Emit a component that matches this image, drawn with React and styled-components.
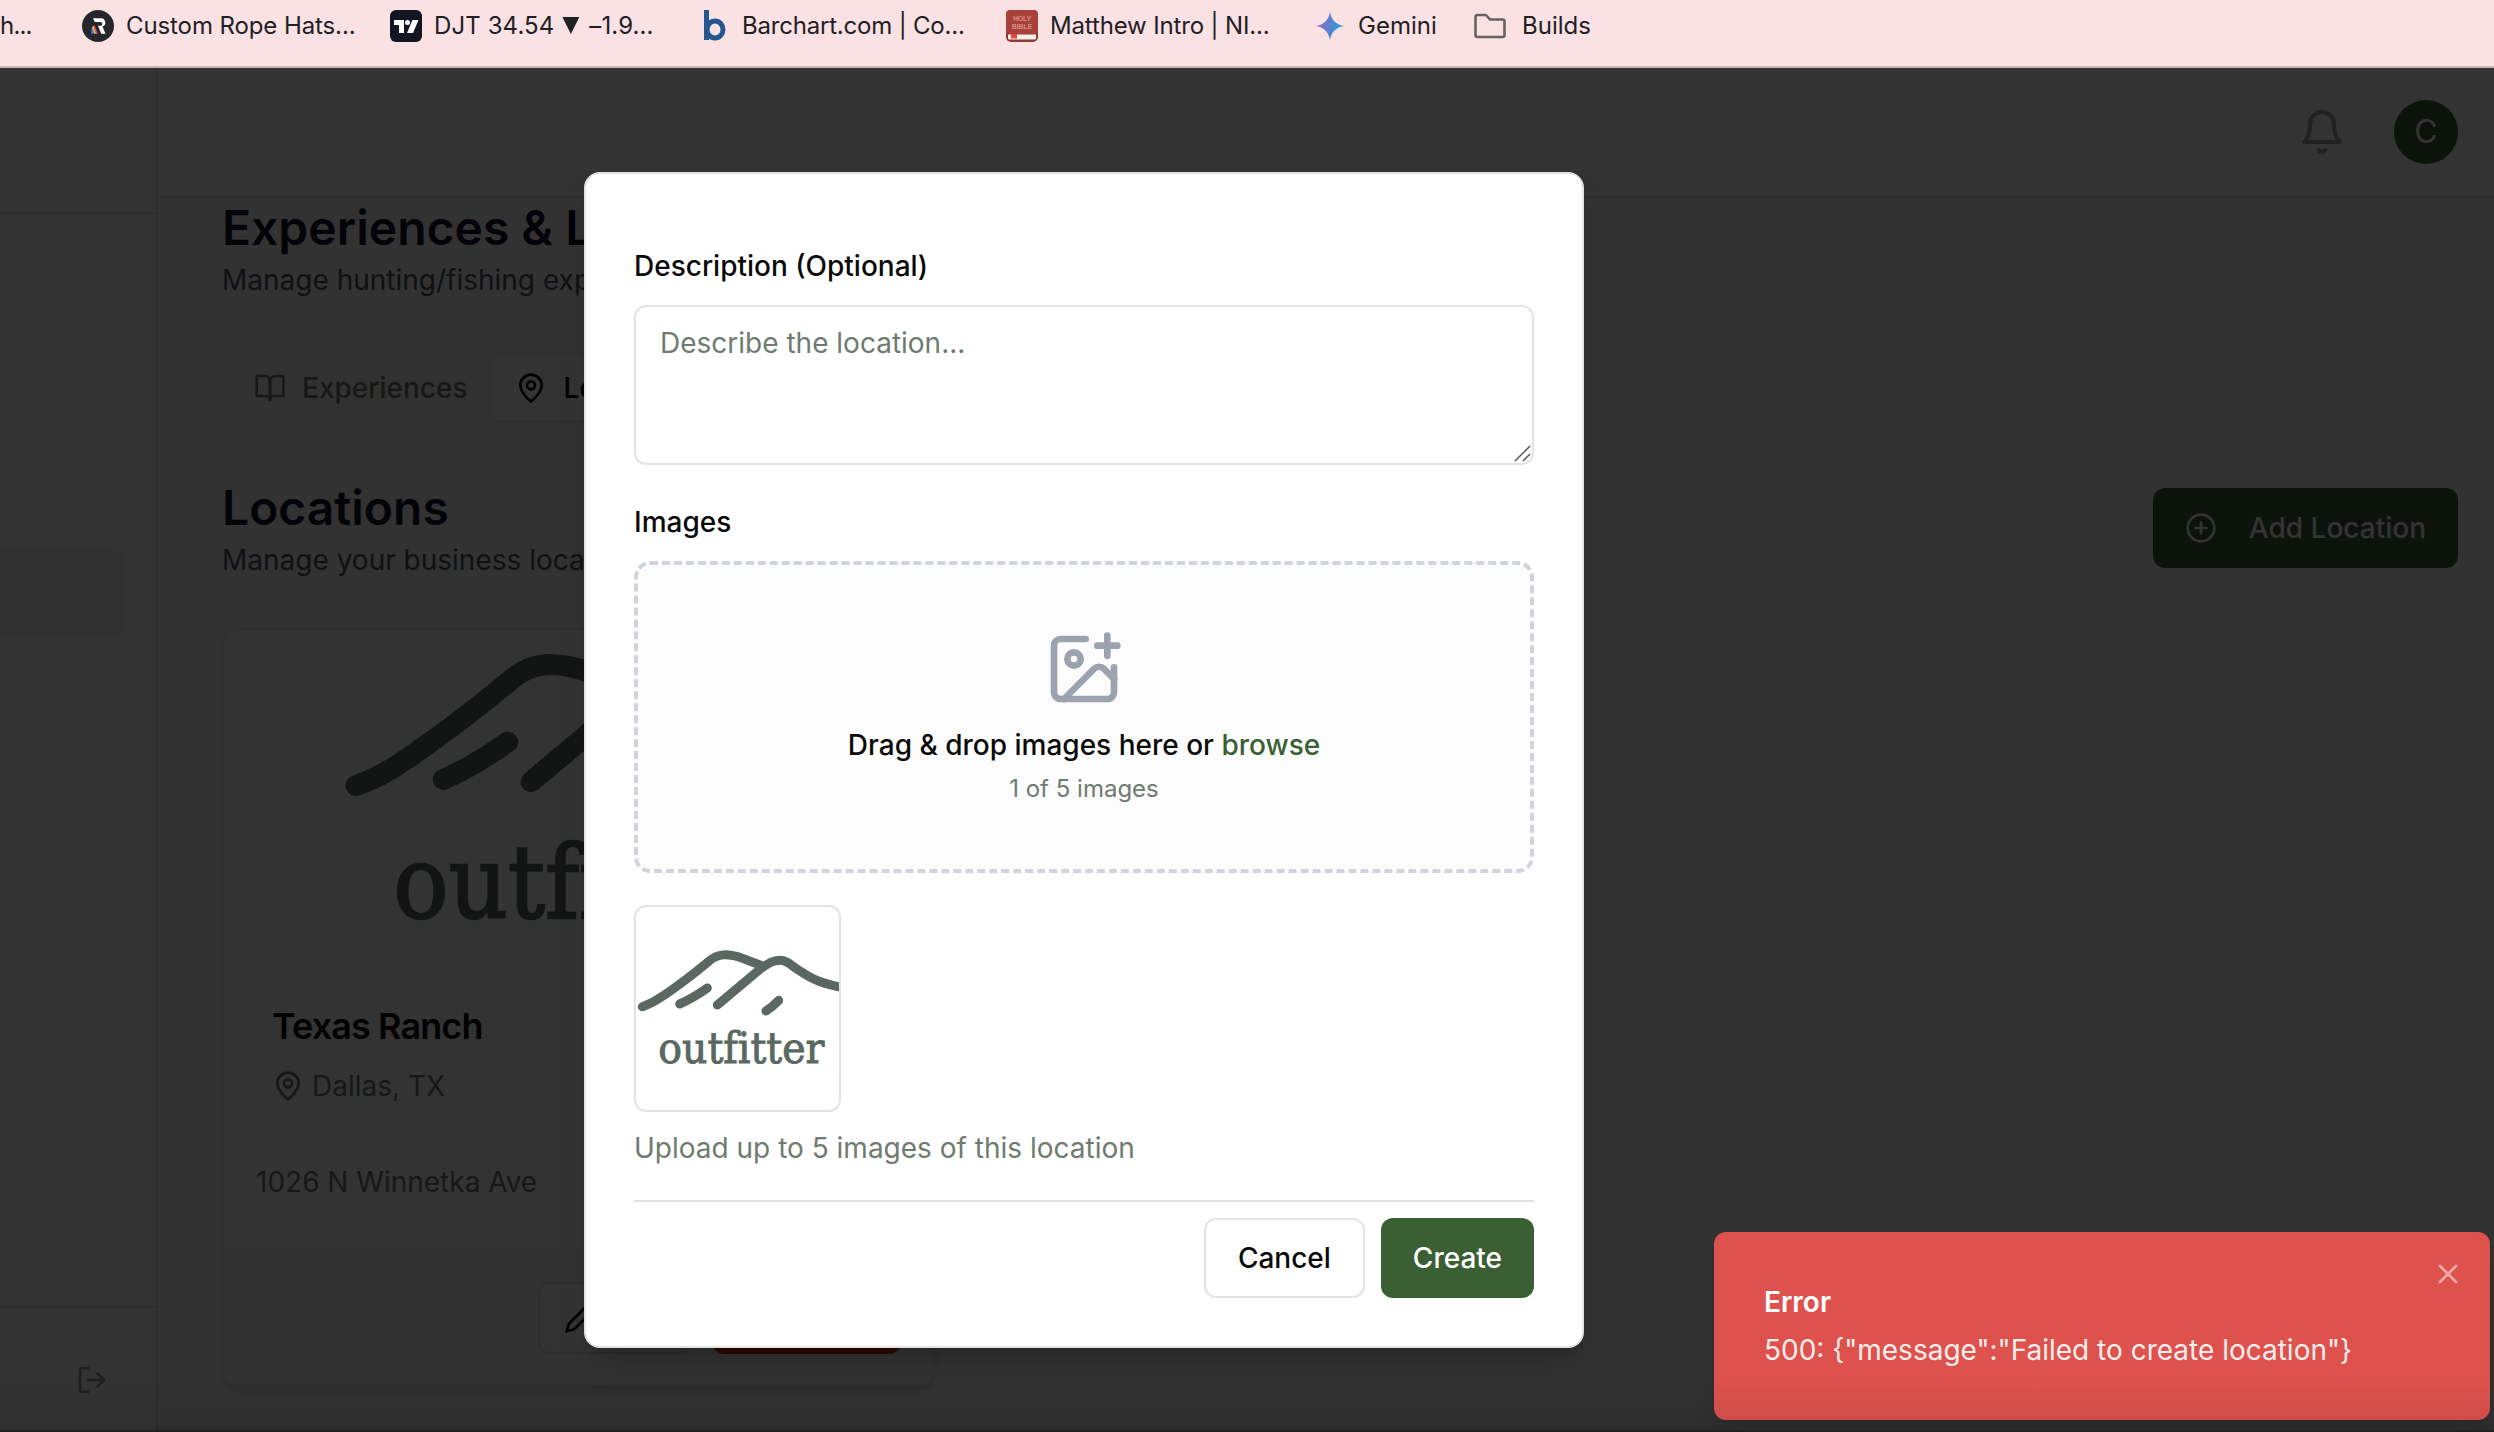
import React from "react";
import styled, { createGlobalStyle } from "styled-components";

const GlobalStyle = createGlobalStyle`
  *, *::before, *::after { box-sizing: border-box; }
  body { margin: 0; overflow: hidden; }
  button, textarea { font: inherit; letter-spacing: inherit; }
  h1, h2, h3, p { margin: 0; }
`;

const border = "#e4e4e4";
const muted = "#6f7b70";
const green = "#395f33";

const Window = styled.div`
  position: relative;
  display: flex;
  flex-direction: column;
  width: 2494px;
  height: 1432px;
  overflow: hidden;
  background: #fff;
  color: #0a0a0a;
  font-family: Inter, "Liberation Sans", sans-serif;
  font-size: 28px;
  line-height: 40px;
`;

/* Bookmarks */
const BookmarkBar = styled.nav`
  display: flex;
  flex: none;
  height: 68px;
  padding-bottom: 14px;
  align-items: center;
  background: #fae1e4;
  border-bottom: 2px solid #c8b4b7;
  color: #1f2023;
  font-size: 24px;
  line-height: 32px;
  white-space: nowrap;
`;
const Bookmark = styled.a`
  display: flex;
  flex: none;
  align-items: center;
  gap: ${(p) => p.$gap || 12}px;
  width: ${(p) => p.$width}px;
  letter-spacing: ${(p) => p.$tracking || 0}px;
  svg { flex: none; }
`;
const Triangle = styled.span`
  display: inline-block;
  width: 17px;
  height: 17px;
  margin: 0 10px 0 8px;
  clip-path: polygon(0 0, 100% 0, 50% 100%);
  background: currentColor;
`;

/* Application shell */
const Shell = styled.div`
  display: flex;
  flex: 1;
  min-height: 0;
`;
const Sidebar = styled.aside`
  display: flex;
  flex: none;
  flex-direction: column;
  width: 158px;
  border-right: 2px solid ${border};
`;
const SidebarBrand = styled.div`
  flex: none;
  height: 146px;
  border-bottom: 2px solid ${border};
`;
const SidebarNav = styled.div`
  flex: 1;
  padding: 336px 32px 0 0;
`;
const ActiveItem = styled.div`
  height: 88px;
  border-radius: 0 12px 12px 0;
  background: #f2f3f3;
`;
const SidebarFooter = styled.div`
  display: flex;
  flex: none;
  justify-content: flex-end;
  height: 126px;
  padding: 56px 48px 0 0;
  border-top: 2px solid ${border};
  color: #8f96a3;
`;
const Content = styled.div`
  display: flex;
  flex: 1;
  flex-direction: column;
  min-width: 0;
`;
const TopBar = styled.header`
  display: flex;
  flex: none;
  align-items: center;
  justify-content: flex-end;
  gap: 48px;
  height: 130px;
  padding-right: 36px;
  border-bottom: 2px solid ${border};
  color: #9ca3af;
`;
const Avatar = styled.div`
  display: grid;
  place-items: center;
  width: 64px;
  height: 64px;
  border-radius: 50%;
  background: ${green};
  color: #fff;
  font-size: 32px;
`;
const Main = styled.main`
  display: flex;
  flex: 1;
  flex-direction: column;
  gap: 48px;
  min-height: 0;
  padding: 0 36px 0 64px;
  background: #fafafa;
  overflow: hidden;
`;
const Heading = styled.div`
  flex: none;
  margin-top: ${(p) => p.$offset || 0}px;
`;
const Title = styled.h1`
  color: #111827;
  font-size: 48px;
  font-weight: 600;
  line-height: 64px;
`;
const Subtitle = styled.p`
  color: #4b5563;
`;
const TabList = styled.div`
  display: flex;
  flex: none;
  align-self: flex-start;
  padding: 8px;
  border-radius: 12px;
  background: #f2f3f2;
`;
const Tab = styled.div`
  display: flex;
  align-items: center;
  gap: 16px;
  height: 64px;
  padding: 0 24px;
  border-radius: 8px;
  background: ${(p) => (p.$active ? "#fff" : "transparent")};
  color: ${(p) => (p.$active ? "#0a0a0a" : muted)};
  font-weight: 500;
  box-shadow: ${(p) => (p.$active ? "0 2px 4px rgba(0,0,0,.06)" : "none")};
`;
const SectionHead = styled.div`
  display: flex;
  flex: none;
  align-items: center;
  justify-content: space-between;
`;
const Button = styled.button`
  display: inline-flex;
  flex: none;
  align-items: center;
  justify-content: ${(p) => (p.$start ? "flex-start" : "center")};
  gap: ${(p) => p.$gap || 16}px;
  height: ${(p) => p.$height || 80}px;
  width: ${(p) => (p.$width ? `${p.$width}px` : "auto")};
  padding: 0 ${(p) => p.$pad || 32}px;
  border: ${(p) => (p.$outline ? `2px solid ${border}` : "0")};
  border-radius: 12px;
  background: ${(p) => p.$bg || "#fff"};
  color: ${(p) => (p.$outline ? "#0a0a0a" : "#fff")};
  font-weight: 500;
  white-space: nowrap;
`;
const Card = styled.article`
  display: flex;
  flex: none;
  flex-direction: column;
  width: 713px;
  height: 758px;
  border: 2px solid #f0f1f1;
  border-radius: 16px;
  background: #fff;
  box-shadow: 0 8px 12px -2px rgba(0,0,0,.12), 0 4px 8px -4px rgba(0,0,0,.1);
  overflow: hidden;
`;
const CardImage = styled.div`
  height: 330px;
  svg { display: block; width: 100%; height: 100%; }
`;
const CardHead = styled.div`
  padding: 48px 48px 0;
`;
const CardTitle = styled.h3`
  margin-bottom: 22px;
  font-size: 36px;
  font-weight: 600;
  letter-spacing: -0.9px;
  line-height: 36px;
`;
const Place = styled.p`
  display: flex;
  align-items: center;
  gap: 8px;
  color: ${muted};
`;
const CardBody = styled.div`
  flex: 1;
  padding: 56px 32px 0;
  color: ${muted};
`;
const CardFooter = styled.div`
  display: flex;
  justify-content: flex-end;
  gap: 20px;
  height: 134px;
  padding: 32px 32px 0;
  background: #fafafa;
`;

/* Layers over the page */
const Overlay = styled.div`
  position: absolute;
  inset: 68px 0 0;
  background: rgba(0, 0, 0, 0.8);
`;
const BottomShade = styled.div`
  position: absolute;
  inset: 1376px 0 0;
  border-bottom: 2px solid #241f21;
  background: linear-gradient(rgba(0,0,0,0), rgba(0,0,0,.08));
  pointer-events: none;
`;
const Dialog = styled.section`
  position: absolute;
  top: 172px;
  left: 584px;
  display: flex;
  flex-direction: column;
  width: 1000px;
  height: 1176px;
  padding: 78px 48px 48px;
  border: 2px solid ${border};
  border-radius: 16px;
  background: #fff;
  box-shadow: 0 20px 30px -6px rgba(0,0,0,.16), 0 8px 12px -8px rgba(0,0,0,.16);
`;
const Field = styled.div`
  display: flex;
  flex-direction: column;
  margin-bottom: ${(p) => p.$after || 0}px;
`;
const Label = styled.label`
  margin-bottom: 25px;
  font-weight: 500;
  line-height: 28px;
`;
const TextWrap = styled.div`
  position: relative;
  display: flex;
`;
const TextArea = styled.textarea`
  flex: 1;
  height: 160px;
  padding: 16px 24px;
  border: 2px solid ${border};
  border-radius: 12px;
  background: #fff;
  outline: 0;
  resize: none;
  &::placeholder { color: ${muted}; opacity: 1; }
`;
const Grip = styled.svg`
  position: absolute;
  right: 2px;
  bottom: 2px;
`;
const DropZone = styled.div`
  display: flex;
  flex-direction: column;
  align-items: center;
  height: 312px;
  padding-top: 64px;
  border: 4px dashed #d1d5db;
  border-radius: 16px;
  background: #fcfcfc;
  svg { color: #9ca3af; margin-bottom: 16px; }
`;
const DropText = styled.p`
  margin-bottom: 8px;
  font-weight: 500;
  span { color: ${green}; }
`;
const DropCount = styled.p`
  color: ${muted};
  font-size: 24px;
  line-height: 32px;
`;
const Thumb = styled.div`
  width: 207px;
  height: 207px;
  margin: 32px 0 16px;
  border: 2px solid ${border};
  border-radius: 12px;
  overflow: hidden;
  svg { display: block; width: 100%; height: 100%; }
`;
const Wordmark = styled.text`
  font-family: "DejaVu Serif", serif;
  font-size: 131px;
  font-variant-ligatures: none;
  fill: #5a6861;
  stroke: #5a6861;
  stroke-width: 3px;
`;
const Hint = styled.p`
  color: ${muted};
`;
const DialogActions = styled.div`
  display: flex;
  justify-content: flex-end;
  gap: 16px;
  margin-top: 32px;
  padding-top: 16px;
  border-top: 2px solid ${border};
`;
const Toast = styled.aside`
  position: absolute;
  top: 1232px;
  left: 1714px;
  display: flex;
  flex-direction: column;
  gap: 8px;
  width: 776px;
  height: 188px;
  padding: 50px;
  border-radius: 12px;
  background: #de524d;
  color: #fff;
  box-shadow: 0 20px 30px -6px rgba(0,0,0,.14);
`;
const ToastTitle = styled.p`
  font-weight: 600;
`;
const ToastText = styled.p`
  opacity: 0.9;
  white-space: nowrap;
`;
const ToastClose = styled.svg`
  position: absolute;
  top: 26px;
  right: 26px;
  color: #f3a9a7;
`;

const Icon = ({ size = 32, stroke = 2, children }) => (
  <svg width={size} height={size} viewBox="0 0 24 24" fill="none" stroke="currentColor"
    strokeWidth={stroke} strokeLinecap="round" strokeLinejoin="round">{children}</svg>
);
const PinIcon = () => (
  <Icon>
    <path d="M20 10c0 6-8 12-8 12s-8-6-8-12a8 8 0 0 1 16 0Z" />
    <circle cx="12" cy="10" r="3" />
  </Icon>
);

const OutfitterLogo = ({ viewBox }) => (
  <svg viewBox={viewBox} preserveAspectRatio="xMidYMid slice">
    <g fill="none" stroke="#5a6861" strokeWidth="27" strokeLinecap="round" strokeLinejoin="round">
      <path d="M127 380C150 372 172 360 190 347C245 310 285 278 325 245C355 218 385 222 420 232L480 255" />
      <path d="M352 375L475 272C505 248 520 241 540 241C562 241 575 258 600 273C640 300 660 308 740 326" />
      <path d="M239 372C265 361 295 343 322 324" />
      <path d="M498 393Q519 379 536 361" />
    </g>
    <Wordmark x="175" y="550" textLength="498" lengthAdjust="spacingAndGlyphs">outfitter</Wordmark>
  </svg>
);

const RopeHatsIcon = () => (
  <svg width="32" height="32" viewBox="0 0 32 32">
    <circle cx="16" cy="16" r="16" fill="#25272c" />
    <path d="M11 8.200h7.800a4.300 4.300 0 0 1 1.700 8.300l3 7.300h-4.300l-3.200-8h2.400a1.900 1.900 0 0 0 0-3.800h-5.600z" fill="#fff" />
    <path d="M10.500 16.500l2.200 7.300H9.200q-.6-4 1.300-7.300z" fill="#3c7be0" />
    <path d="M11.500 15.800l2.800 8h-1.900l-2.400-6.500z" fill="#f0c431" />
    <path d="M12.700 15.300l3.100 8.500h-1.700L11.500 16z" fill="#e34a6c" />
  </svg>
);
const TradingViewIcon = () => (
  <svg width="32" height="32" viewBox="0 0 32 32">
    <rect width="32" height="32" rx="6" fill="#131622" />
    <path d="M4 10h10v13H9v-8H4z" fill="#fff" />
    <circle cx="17.500" cy="12.500" r="2.500" fill="#fff" />
    <path d="M22.500 10H28.500l-5.500 13H17z" fill="#fff" />
  </svg>
);
const BarchartIcon = () => (
  <svg width="32" height="32" viewBox="0 0 32 32" fill="none" stroke="#24568f">
    <path d="M8.500 0v30" strokeWidth="5" />
    <ellipse cx="17" cy="19.500" rx="8" ry="8.500" strokeWidth="5" />
  </svg>
);
const BibleIcon = () => (
  <svg width="32" height="32" viewBox="0 0 32 32">
    <rect width="32" height="32" rx="5" fill="#8e3a36" />
    <rect y="0" width="32" height="24" rx="4" fill="#a94039" />
    <path d="M2 24.500h28v4q0 1-2 1H4q-2 0-2-1z" fill="#f6efe6" />
    <rect x="5" y="24" width="6" height="4.500" fill="#e8453c" />
    <g fill="#d98f83" fontFamily='"Liberation Sans", sans-serif' fontSize="7" fontWeight="700" textAnchor="middle">
      <text x="16" y="11">HOLY</text>
      <text x="16" y="18.500">BIBLE</text>
    </g>
  </svg>
);
const GeminiIcon = () => (
  <svg width="32" height="32" viewBox="0 0 32 32">
    <defs>
      <linearGradient id="spark" x1="0" y1="0.400" x2="1" y2="0.600">
        <stop offset="0.100" stopColor="#9168c0" />
        <stop offset="0.500" stopColor="#5684d1" />
        <stop offset="0.900" stopColor="#1ba1e3" />
      </linearGradient>
    </defs>
    <path d="M16 1.500C17 9.500 22 15 30.500 16C22 17 17 22.500 16 30.500C15 22.500 10 17 1.500 16C10 15 15 9.500 16 1.500z" fill="url(#spark)" />
  </svg>
);
const FolderIcon = () => (
  <svg width="32" height="32" viewBox="0 0 32 32" fill="none" stroke="#67625f" strokeWidth="2.600" strokeLinejoin="round">
    <path d="M1.500 7q0-2 2-2H12l4 4.500h12.500q2 0 2 2V25q0 2-2 2h-25q-2 0-2-2z" />
  </svg>
);

export default function App() {
  return (
    <Window>
      <GlobalStyle />
      <BookmarkBar>
        <Bookmark $width={82} $tracking={-0.8}>h...</Bookmark>
        <Bookmark $width={308} $tracking={-0.1}><RopeHatsIcon />Custom Rope Hats...</Bookmark>
        <Bookmark $width={308} $tracking={0.1}><TradingViewIcon /><span>DJT 34.54<Triangle />–1.9...</span></Bookmark>
        <Bookmark $width={308} $tracking={-0.2}><BarchartIcon />Barchart.com | Co...</Bookmark>
        <Bookmark $width={308} $tracking={-0.15}><BibleIcon />Matthew Intro | NI...</Bookmark>
        <Bookmark $width={160}><GeminiIcon />Gemini</Bookmark>
        <Bookmark $width={160} $gap={16}><FolderIcon />Builds</Bookmark>
      </BookmarkBar>

      <Shell>
        <Sidebar>
          <SidebarBrand />
          <SidebarNav><ActiveItem /></SidebarNav>
          <SidebarFooter>
            <Icon>
              <path d="M9 21H5a2 2 0 0 1-2-2V5a2 2 0 0 1 2-2h4" />
              <path d="m16 17 5-5-5-5M21 12H9" />
            </Icon>
          </SidebarFooter>
        </Sidebar>
        <Content>
          <TopBar>
            <Icon size={48}>
              <path d="M6 8a6 6 0 0 1 12 0c0 7 3 9 3 9H3s3-2 3-9" />
              <path d="M10.300 21a1.940 1.940 0 0 0 3.400 0" />
            </Icon>
            <Avatar>C</Avatar>
          </TopBar>
          <Main>
            <Heading $offset={-2}>
              <Title>Experiences &amp; L</Title>
              <Subtitle>Manage hunting/fishing exp</Subtitle>
            </Heading>
            <TabList>
              <Tab>
                <Icon>
                  <path d="M2 3h6a4 4 0 0 1 4 4v14a3 3 0 0 0-3-3H2z" />
                  <path d="M22 3h-6a4 4 0 0 0-4 4v14a3 3 0 0 1 3-3h7z" />
                </Icon>
                Experiences
              </Tab>
              <Tab $active><PinIcon />Lo</Tab>
            </TabList>
            <SectionHead>
              <Heading>
                <Title as="h2">Locations</Title>
                <Subtitle>Manage your business loca</Subtitle>
              </Heading>
              <Button $bg={green} $gap={32}>
                <Icon><circle cx="12" cy="12" r="10" /><path d="M8 12h8M12 8v8" /></Icon>
                Add Location
              </Button>
            </SectionHead>
            <Card>
              <CardImage><OutfitterLogo viewBox="-42.700 180 911.300 424.200" /></CardImage>
              <CardHead>
                <CardTitle>Texas Ranch</CardTitle>
                <Place><PinIcon />Dallas, TX</Place>
              </CardHead>
              <CardBody>1026 N Winnetka Ave</CardBody>
              <CardFooter>
                <Button $outline $start $height={72} $pad={24} $width={154}>
                  <Icon><path d="M17 3a2.850 2.830 0 1 1 4 4L7.500 20.500 2 22l1.500-5.500Z" /><path d="m15 5 4 4" /></Icon>
                </Button>
                <Button $bg="#dc2626" $height={72} $pad={24} $width={189} />
              </CardFooter>
            </Card>
          </Main>
        </Content>
      </Shell>

      <Overlay />

      <Dialog>
        <Field $after={43}>
          <Label>Description (Optional)</Label>
          <TextWrap>
            <TextArea placeholder="Describe the location..." />
            <Grip width="18" height="18" viewBox="0 0 18 18" stroke="#555" strokeWidth="1.500">
              <path d="M1 16L16 1M9 16L16 9" />
            </Grip>
          </TextWrap>
        </Field>
        <Field>
          <Label>Images</Label>
          <DropZone>
            <Icon size={80}>
              <path d="M16 5h6M19 2v6" />
              <path d="M21 11.500V19a2 2 0 0 1-2 2H5a2 2 0 0 1-2-2V5a2 2 0 0 1 2-2h7.500" />
              <path d="m21 15-3.086-3.086a2 2 0 0 0-2.828 0L6 21" />
              <circle cx="9" cy="9" r="2" />
            </Icon>
            <DropText>Drag &amp; drop images here or <span>browse</span></DropText>
            <DropCount>1 of 5 images</DropCount>
          </DropZone>
          <Thumb><OutfitterLogo viewBox="108 81 609 609" /></Thumb>
          <Hint>Upload up to 5 images of this location</Hint>
        </Field>
        <DialogActions>
          <Button $outline>Cancel</Button>
          <Button $bg={green}>Create</Button>
        </DialogActions>
      </Dialog>

      <Toast>
        <ToastTitle>Error</ToastTitle>
        <ToastText>{'500: {"message":"Failed to create location"}'}</ToastText>
        <ToastClose width="32" height="32" viewBox="0 0 24 24" fill="none" stroke="currentColor"
          strokeWidth="2" strokeLinecap="round">
          <path d="M18 6 6 18M6 6l12 12" />
        </ToastClose>
      </Toast>
      <BottomShade />
    </Window>
  );
}
